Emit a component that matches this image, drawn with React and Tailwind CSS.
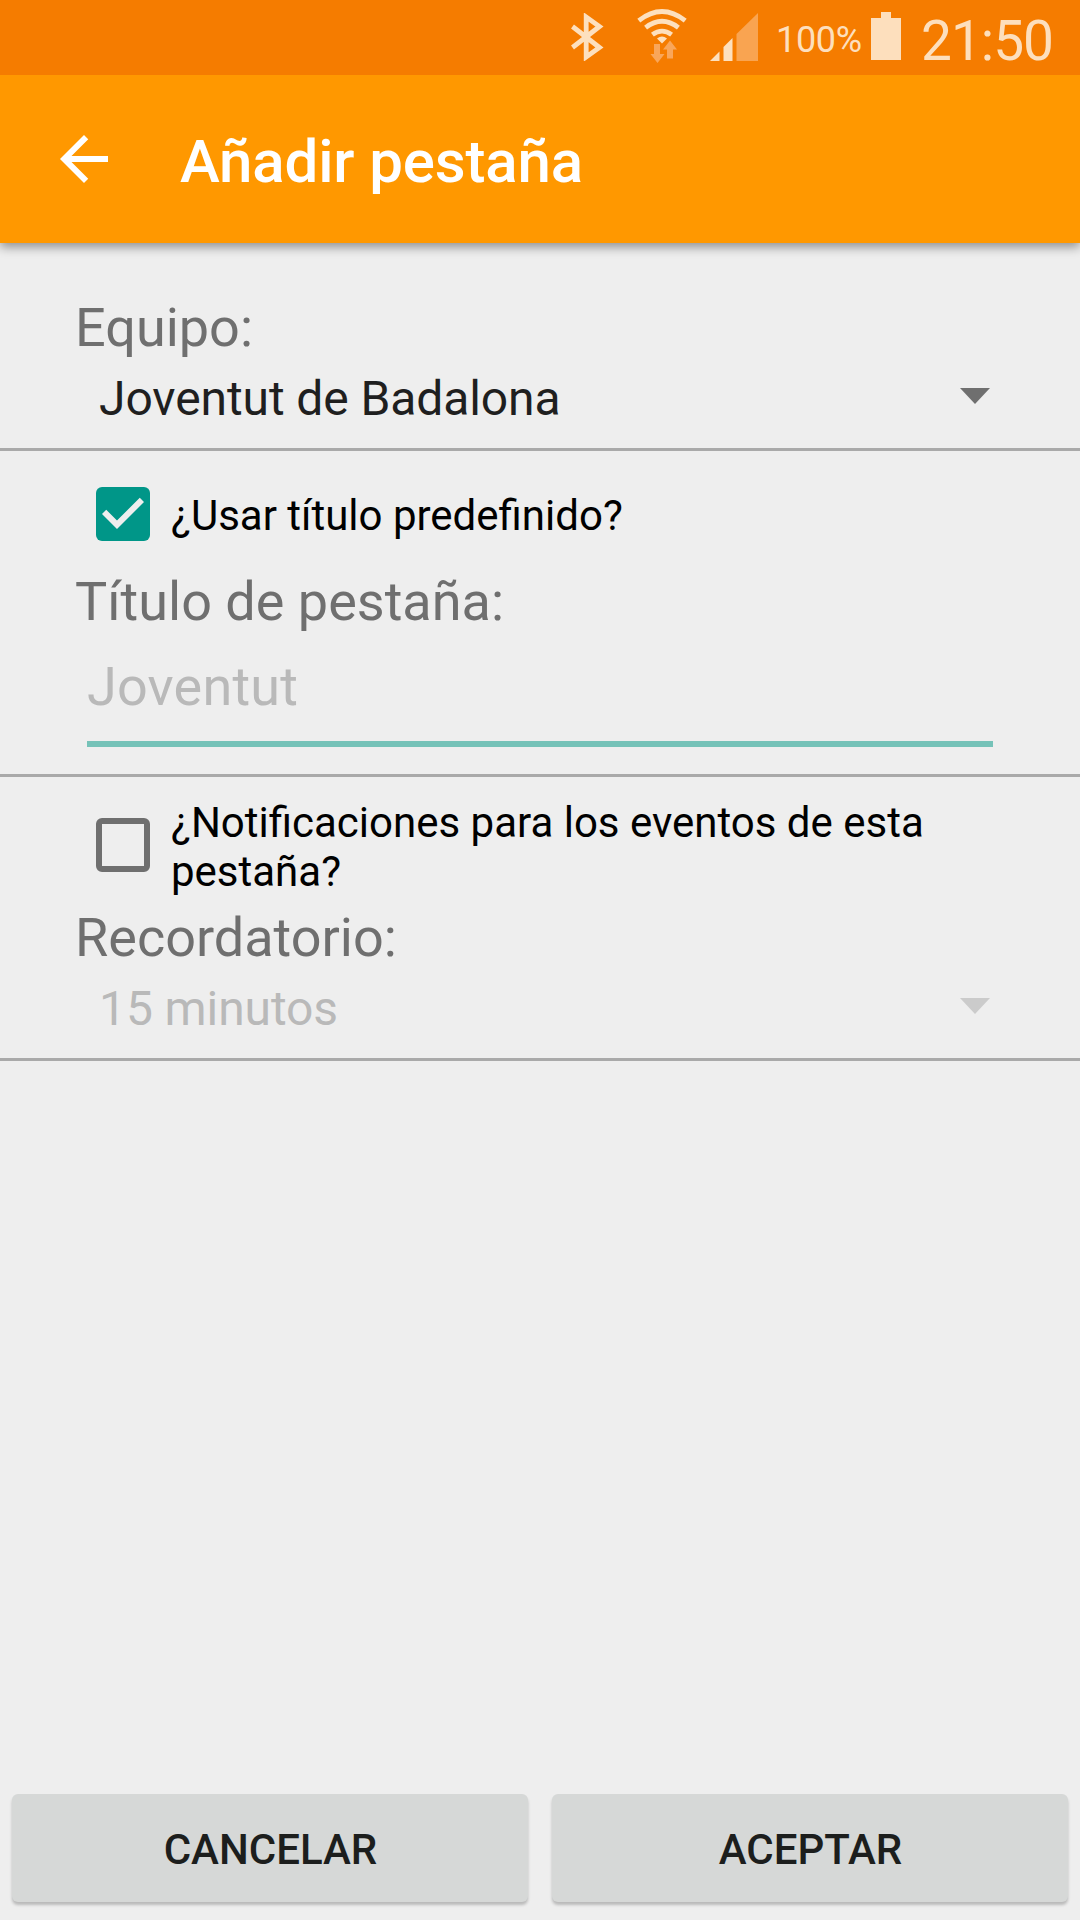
import React from "react";

const BluetoothIcon = () => (
  <svg className="w-[34px] h-12" viewBox="0 0 34 48" fill="none">
    <path
      d="M1.500 13.500L28.500 34.500L15.200 44V4L28.500 13.500L1.500 34.500"
      stroke="#fde0be"
      strokeWidth="4.8"
    />
  </svg>
);

const WifiIcon = () => (
  <svg className="w-[50px] h-[54px]" viewBox="0 0 50 54" fill="none">
    <g stroke="#fde0be" strokeWidth="4.8">
      <path d="M1.8 11.6Q25 -6.6 48.2 11.6" />
      <path d="M8.6 18.6Q25 6 41.4 18.6" />
      <path d="M15.4 25.6Q25 18.6 34.6 25.6" />
    </g>
    <path d="M20 29.5Q25 25.4 30 29.5L25 34.5Z" fill="#fde0be" />
    <path d="M17 35h6v10h4.5L20.500 54L13.500 45H17Z" fill="#f9a65a" />
    <path d="M30 49.500h6V40.500h4L33 31.500L26 40.500h4Z" fill="#f9a65a" />
  </svg>
);

const SignalIcon = () => (
  <svg className="w-12 h-12" viewBox="0 0 48 48">
    <path d="M0 48L9.500 38.500V48Z" fill="#fde0be" />
    <path d="M13.500 48V34L22.500 25V48Z" fill="#fde0be" />
    <path d="M26.500 48V21L48 0V48Z" fill="#f9a451" />
  </svg>
);

const BatteryIcon = () => (
  <svg className="w-[30px] h-12" viewBox="0 0 30 48" fill="#fddfbd">
    <path d="M10 0H20V6H30V48H0V6H10Z" />
  </svg>
);

const StatusBar = () => (
  <div className="relative z-10 flex items-start h-[75px] bg-[#f57c00] text-[#fddfbd]">
    <div className="ml-[571px] mt-[13px]">
      <BluetoothIcon />
    </div>
    <div className="ml-8 mt-[9px]">
      <WifiIcon />
    </div>
    <div className="ml-[23px] mt-[13px]">
      <SignalIcon />
    </div>
    <span className="ml-[18px] mt-[19px] w-[86px] text-[36px] leading-[42px] tracking-[-0.3px]">
      100%
    </span>
    <div className="ml-[9px] mt-3">
      <BatteryIcon />
    </div>
    <span className="ml-5 mt-[9px] text-[55px] leading-[64px] tracking-[-1px]">
      21:50
    </span>
  </div>
);

const AppBar = () => (
  <header className="relative flex items-center h-[168px] pl-12 bg-[#ff9800] text-white shadow-[0_4px_10px_rgba(0,0,0,0.4)]">
    <svg className="w-[72px] h-[72px]" viewBox="0 0 24 24" fill="currentColor">
      <path d="M20 11H7.830l5.590-5.590L12 4l-8 8 8 8 1.410-1.410L7.830 13H20v-2z" />
    </svg>
    <h1 className="ml-[60px] mt-[5px] text-[60px] leading-[72px] font-medium tracking-[-0.15px]">
      Añadir pestaña
    </h1>
  </header>
);

const Label = ({ children }) => (
  <div className="pl-[75px] text-[54px] leading-[64px] text-[#6f6f6f]">
    {children}
  </div>
);

const Spinner = ({ value, disabled }) => (
  <div
    className={`flex justify-between pl-[99px] pr-[90px] h-[88px] ${
      disabled ? "text-[#b9b9b9]" : "text-[#1f1f1f]"
    }`}
  >
    <span className="text-[48px] leading-[78px] tracking-[-0.1px]">
      {value}
    </span>
    <svg
      className={`mt-7 w-[30px] h-4 ${
        disabled ? "text-[#cbcbcb]" : "text-[#6f6f6f]"
      }`}
      viewBox="0 0 30 16"
      fill="currentColor"
    >
      <path d="M0 0H30L15 16Z" />
    </svg>
  </div>
);

const Checkbox = ({ checked }) =>
  checked ? (
    <div className="shrink-0 w-[54px] h-[54px] rounded-[6px] bg-[#009688]">
      <svg
        className="w-[54px] h-[54px]"
        viewBox="3 3 18 18"
        fill="#eeeeee"
      >
        <path d="M10 17l-5-5 1.410-1.410L10 14.170l7.590-7.590L19 8z" />
      </svg>
    </div>
  ) : (
    <div className="shrink-0 w-[54px] h-[54px] rounded-[6px] border-6 border-[#6f6f6f]" />
  );

const Divider = () => <div className="h-[3px] bg-[#a9a9a9]" />;

export default function App() {
  return (
    <div className="flex flex-col w-[1080px] h-[1920px] bg-[#eeeeee] font-['Roboto',sans-serif] overflow-hidden">
      <StatusBar />
      <AppBar />

      <main className="flex-1">
        <section className="pt-[53px]">
          <Label>Equipo:</Label>
          <Spinner value="Joventut de Badalona" />
        </section>
        <Divider />

        <section>
          <div className="flex items-start h-[119px] pt-9 pl-24">
            <Checkbox checked />
            <span className="ml-[21px] mt-1 text-[42px] leading-[49px] text-black">
              ¿Usar título predefinido?
            </span>
          </div>
          <Label>Título de pestaña:</Label>
          <div className="mt-[21px] mx-[87px] mb-[27px] pb-[22px] border-b-6 border-[#75c2b8] text-[54px] leading-[64px] tracking-[0.2px] text-[#b9b9b9]">
            Joventut
          </div>
        </section>
        <Divider />

        <section>
          <div className="flex items-start h-[129px] pt-[21px] pl-24">
            <div className="mt-5">
              <Checkbox />
            </div>
            <span className="ml-[21px] w-[800px] text-[42px] leading-[49px] text-black">
              ¿Notificaciones para los eventos de esta pestaña?
            </span>
          </div>
          <Label>Recordatorio:</Label>
          <Spinner value="15 minutos" disabled />
        </section>
        <Divider />
      </main>

      <footer className="flex gap-6 px-3 pb-[18px]">
        {["Cancelar", "Aceptar"].map((text) => (
          <button
            key={text}
            className="flex-1 h-[108px] pt-[3px] pl-px rounded-[6px] bg-[#d6d8d7] text-[42px] leading-[50px] font-medium uppercase text-[#1c1e1d] shadow-[0_3px_3px_rgba(0,0,0,0.22)]"
          >
            {text}
          </button>
        ))}
      </footer>
    </div>
  );
}
